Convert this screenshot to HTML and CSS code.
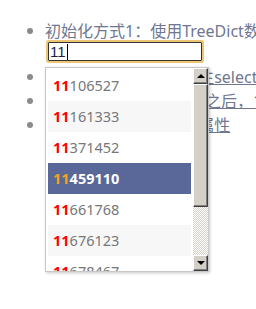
FILE: index.html
```html
<!DOCTYPE html>
<html>
<head>
<meta charset="utf-8">
<link rel="stylesheet" href="styles.css">
</head>
<body>
<ul class="list">
  <li class="item">
    <span class="dot"></span>
    <span class="text">初始化方式1：使用TreeDict数据源</span>
    <div class="field"><span class="val">11</span><span class="caret"></span></div>
  </li>
  <li class="item">
    <span class="dot"></span>
    <a class="text link">初始化方式2：通过原生select元素</a>
  </li>
  <li class="item">
    <span class="dot"></span>
    <a class="text link">在数据源异步加载完成之后，1</a>
  </li>
  <li class="item">
    <span class="dot"></span>
    <a class="text link">下拉列表的3种可设置属性</a>
  </li>
</ul>

<div class="dropdown">
  <div class="rows">
    <div class="row"><b class="hit">11</b>106527</div>
    <div class="row alt"><b class="hit">11</b>161333</div>
    <div class="row"><b class="hit">11</b>371452</div>
    <div class="row active"><b class="hit">11</b>459110</div>
    <div class="row"><b class="hit">11</b>661768</div>
    <div class="row alt"><b class="hit">11</b>676123</div>
    <div class="row"><b class="hit">11</b>678467</div>
  </div>
  <div class="scrollbar">
    <div class="btn"><span class="arrow up"></span></div>
    <div class="thumb"></div>
    <div class="track"></div>
    <div class="btn"><span class="arrow down"></span></div>
  </div>
</div>
</body>
</html>
```

FILE: styles.css
```css
html, body {
  margin: 0;
  padding: 0;
  background: #fff;
}
body {
  width: 256px;
  height: 309px;
  overflow: hidden;
  position: relative;
  font-family: "Noto Sans", "Noto Sans CJK SC", sans-serif;
}
.list {
  list-style: none;
  margin: 0;
  padding: 19px 0 0 0;
}
.item {
  display: grid;
  grid-template-columns: 45px auto;
  line-height: 24px;
  font-size: 16px;
  color: #6f7791;
  white-space: nowrap;
}
.dot {
  width: 6px;
  height: 6px;
  border-radius: 50%;
  background: #8a8a8a;
  align-self: center;
  margin-left: 27px;
}
.text {
  grid-column: 2;
  grid-row: 1;
}
.link {
  text-decoration: underline;
  color: #6f7791;
}
.field {
  grid-column: 2;
  grid-row: 2;
  margin: -1px 0 4px 3px;
  width: 151px;
  height: 17px;
  border: 1px solid #333;
  box-shadow: 0 0 0 2px #ecc575;
  border-radius: 1px;
  display: flex;
  align-items: center;
  padding-left: 1px;
  font-family: "Liberation Sans", sans-serif;
  font-size: 15px;
  line-height: 17px;
  color: #1c1c4a;
}
.caret {
  width: 1px;
  height: 16px;
  background: #000;
  margin-left: 1px;
}
.dropdown {
  position: absolute;
  left: 45px;
  top: 67px;
  width: 162px;
  height: 203px;
  border: 1px solid #c8c8c8;
  background: #fff;
  box-shadow: 1px 1px 3px rgba(0,0,0,0.22);
  display: flex;
  gap: 2px;
}
.rows {
  width: 143px;
  padding: 2px 0 0 2px;
  overflow: hidden;
}
.row {
  height: 31px;
  line-height: 31px;
  padding-left: 5px;
  font-family: "Noto Sans", sans-serif;
  font-size: 14.5px;
  color: #777;
}
.row.alt { background: #f7f7f7; }
.hit { color: #ff0000; font-weight: 700; }
.row.active {
  background: #5a6899;
  color: #fff;
  font-weight: 700;
}
.row.active .hit { color: #f5a21b; }
.scrollbar {
  width: 15px;
  display: flex;
  flex-direction: column;
}
.btn, .thumb {
  background: #d4d0c8;
  box-sizing: border-box;
  border-top: 1px solid #fff;
  border-left: 1px solid #fff;
  border-right: 1px solid #404040;
  border-bottom: 1px solid #404040;
  box-shadow: inset -1px -1px 0 #808080;
}
.btn {
  height: 16px;
  display: flex;
  align-items: center;
  justify-content: center;
}
.thumb { height: 123px; }
.track {
  flex: 1;
  background-color: #fff;
  background-image: repeating-conic-gradient(#d4d0c8 0 25%, #fff 0 50%);
  background-size: 2px 2px;
}
.arrow {
  width: 0;
  height: 0;
  border-left: 4px solid transparent;
  border-right: 4px solid transparent;
}
.arrow.up { border-bottom: 4px solid #000; }
.arrow.down { border-top: 4px solid #000; }
```
